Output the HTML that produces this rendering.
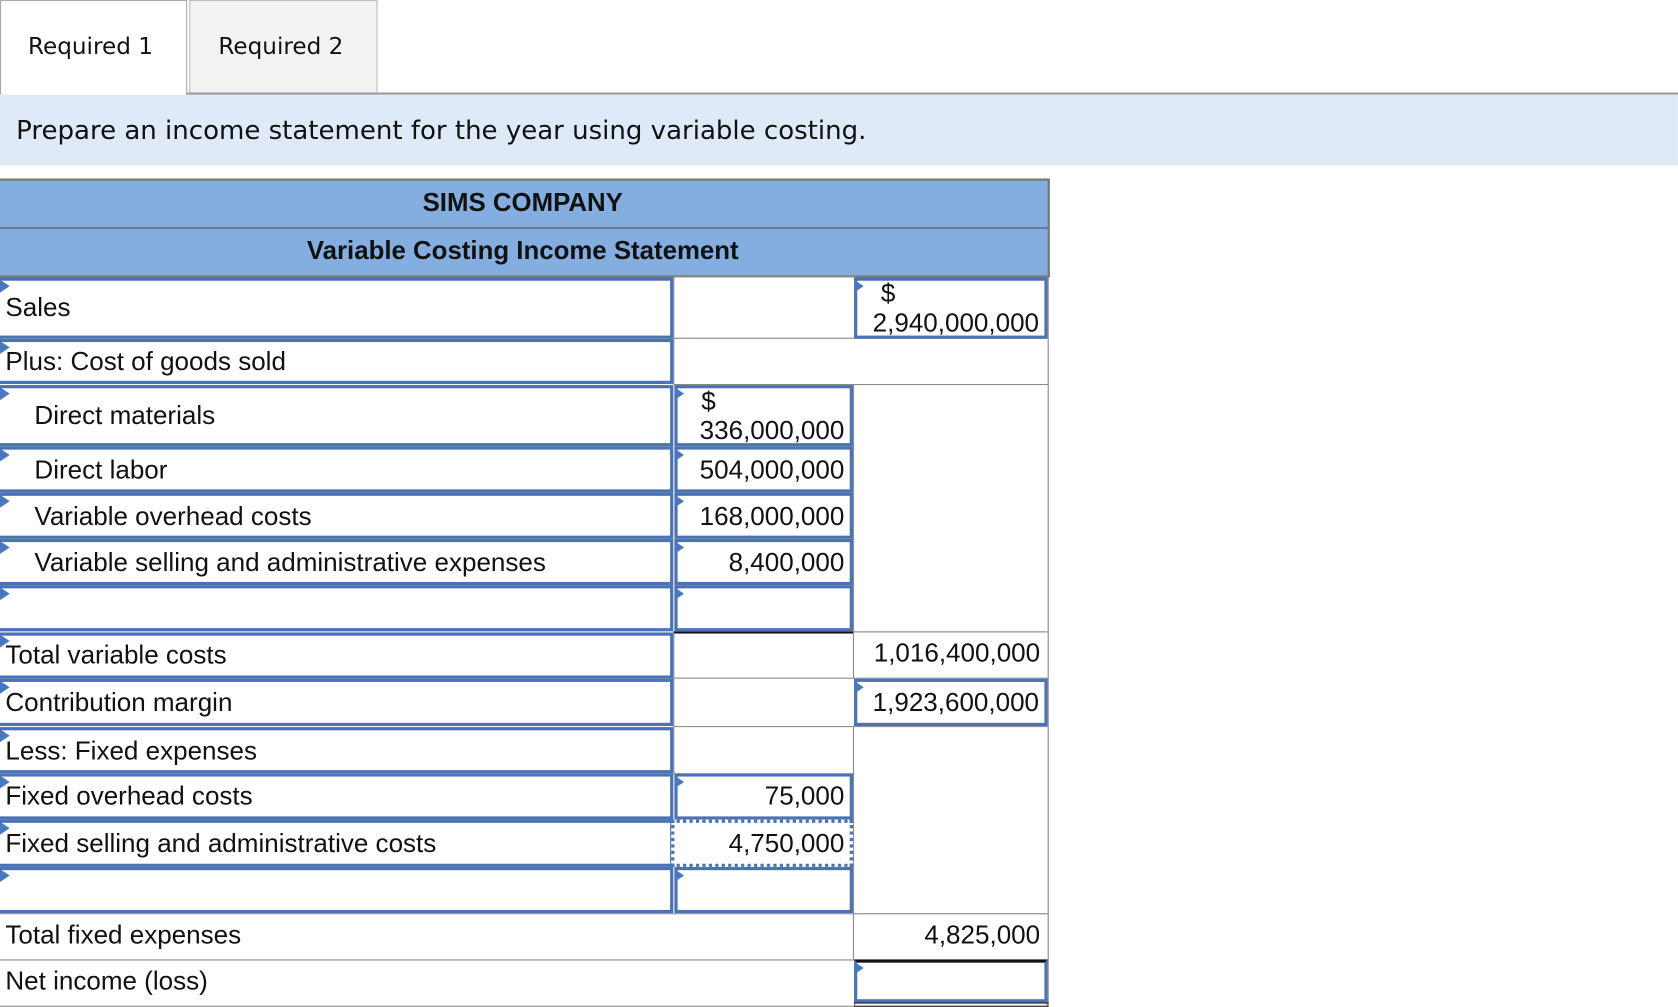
<!DOCTYPE html>
<html><head><meta charset="utf-8"><style>
*{margin:0;padding:0;box-sizing:border-box}
body{width:1678px;height:1004px;background:#fff;overflow:hidden;font-family:"Liberation Sans",Arial,sans-serif;color:#111}
#w{position:absolute;left:0;top:0;width:1560px;height:934px;transform:scale(1.0756);transform-origin:0 0}
div{position:absolute}
.c{border:1px solid #8a8a8a;background:#fff}
.b{border:3px solid #4a72b5;background:#fff;font-size:24.2px;line-height:27px}
.t{width:0;height:0;border-top:6px solid transparent;border-bottom:6px solid transparent;border-left:9px solid #4a78c0;left:-3px;top:-1px}
.l{font-size:24.2px;line-height:27px}
.r{text-align:right;padding-right:5px;white-space:nowrap}
.d{font-family:"DejaVu Sans",Verdana,sans-serif}
</style></head><body><div id="w">
<div style="left:0;top:0;width:174px;height:88px;border:1px solid #aaa;border-bottom:none;background:#fff"></div>
<div class="d" style="left:26px;top:30px;font-size:21.5px;line-height:27px">Required 1</div>
<div style="left:176px;top:0;width:175px;height:87px;border:1px solid #bbb;border-bottom:none;background:#f3f3f3"></div>
<div class="d" style="left:203px;top:30px;font-size:21.5px;line-height:27px">Required 2</div>
<div style="left:173px;top:86px;width:1387px;height:2px;background:#999"></div>
<div style="left:0;top:88px;width:1560px;height:66px;background:#deeaf8"></div>
<div class="d" style="left:15px;top:106px;font-size:24.2px;line-height:30px">Prepare an income statement for the year using variable costing.</div>
<div style="left:0;top:166px;width:976px;height:92px;background:#84aee0;border:2px solid #777;border-left:none"></div>
<div style="left:0;top:211px;width:975px;height:2px;background:#6a7c94"></div>
<div style="left:0;top:175px;width:972px;text-align:center;font-weight:bold;font-size:24px;line-height:28px">SIMS COMPANY</div>
<div style="left:0;top:220px;width:972px;text-align:center;font-weight:bold;font-size:24px;line-height:28px">Variable Costing Income Statement</div>
<div style="left:973px;top:257px;width:2px;height:678px;background:#888"></div>
<div class="c" style="left:626px;top:257px;width:169px;height:58px"></div>
<div class="c" style="left:626px;top:314px;width:349px;height:44px"></div>
<div class="c" style="left:793px;top:357px;width:182px;height:231px"></div>
<div class="c" style="left:626px;top:587px;width:169px;height:44px;border-top:2px solid #111"></div>
<div class="c" style="left:793px;top:587px;width:182px;height:44px"></div>
<div class="l r" style="left:794px;top:594px;width:178px">1,016,400,000</div>
<div class="c" style="left:626px;top:630px;width:169px;height:46px"></div>
<div class="c" style="left:626px;top:675px;width:169px;height:45px"></div>
<div class="c" style="left:793px;top:675px;width:182px;height:175px"></div>
<div class="c" style="left:0;top:849px;width:795px;height:44px;border-left:none"></div>
<div class="l" style="left:5px;top:856px">Total fixed expenses</div>
<div class="c" style="left:793px;top:849px;width:182px;height:44px"></div>
<div class="l r" style="left:794px;top:856px;width:178px">4,825,000</div>
<div class="c" style="left:0;top:892px;width:795px;height:44px;border-left:none"></div>
<div class="l" style="left:5px;top:899px">Net income (loss)</div>
<div class="b" style="left:794px;top:892px;width:180px;height:40px;border-top-color:#111"><div class="t"></div></div>
<div style="left:794px;top:932px;width:181px;height:4px;border-top:1px solid #111;border-bottom:1px solid #111"></div>
<div class="b" style="left:-3px;top:258px;width:629px;height:57px"><div class="t" style="left:0"></div><div style="left:5px;top:12px">Sales</div></div>
<div class="b" style="left:-3px;top:315px;width:629px;height:42px"><div class="t" style="left:0"></div><div style="left:5px;top:5px">Plus: Cost of goods sold</div></div>
<div class="b" style="left:-3px;top:358px;width:629px;height:57px"><div class="t" style="left:0"></div><div style="left:32px;top:12px">Direct materials</div></div>
<div class="b" style="left:-3px;top:415px;width:629px;height:43px"><div class="t" style="left:0"></div><div style="left:32px;top:6px">Direct labor</div></div>
<div class="b" style="left:-3px;top:458px;width:629px;height:43px"><div class="t" style="left:0"></div><div style="left:32px;top:6px">Variable overhead costs</div></div>
<div class="b" style="left:-3px;top:501px;width:629px;height:43px"><div class="t" style="left:0"></div><div style="left:32px;top:6px">Variable selling and administrative expenses</div></div>
<div class="b" style="left:-3px;top:544px;width:629px;height:43px"><div class="t" style="left:0"></div></div>
<div class="b" style="left:-3px;top:588px;width:629px;height:43px"><div class="t" style="left:0"></div><div style="left:5px;top:5px">Total variable costs</div></div>
<div class="b" style="left:-3px;top:631px;width:629px;height:44px"><div class="t" style="left:0"></div><div style="left:5px;top:6px">Contribution margin</div></div>
<div class="b" style="left:-3px;top:676px;width:629px;height:43px"><div class="t" style="left:0"></div><div style="left:5px;top:6px">Less: Fixed expenses</div></div>
<div class="b" style="left:-3px;top:719px;width:629px;height:43px"><div class="t" style="left:0"></div><div style="left:5px;top:5px">Fixed overhead costs</div></div>
<div class="b" style="left:-3px;top:762px;width:629px;height:44px"><div class="t" style="left:0"></div><div style="left:5px;top:6px">Fixed selling and administrative costs</div></div>
<div class="b" style="left:-3px;top:806px;width:629px;height:43px"><div class="t" style="left:0"></div></div>
<div class="b" style="left:794px;top:258px;width:180px;height:57px"><div class="t"></div><div style="left:22px;top:-1px">$</div><div class="r" style="right:0;top:26px">2,940,000,000</div></div>
<div class="b" style="left:627px;top:358px;width:166px;height:57px"><div class="t"></div><div style="left:22px;top:-1px">$</div><div class="r" style="right:0;top:26px">336,000,000</div></div>
<div class="b" style="left:627px;top:415px;width:166px;height:43px"><div class="t"></div><div class="r" style="right:0;top:6px">504,000,000</div></div>
<div class="b" style="left:627px;top:458px;width:166px;height:43px"><div class="t"></div><div class="r" style="right:0;top:6px">168,000,000</div></div>
<div class="b" style="left:627px;top:501px;width:166px;height:43px"><div class="t"></div><div class="r" style="right:0;top:6px">8,400,000</div></div>
<div class="b" style="left:627px;top:544px;width:166px;height:43px"><div class="t"></div></div>
<div class="b" style="left:794px;top:631px;width:180px;height:44px"><div class="t"></div><div class="r" style="right:0;top:6px">1,923,600,000</div></div>
<div class="b" style="left:627px;top:719px;width:166px;height:43px"><div class="t"></div><div class="r" style="right:0;top:5px">75,000</div></div>
<div class="b" style="left:624px;top:762px;width:169px;height:44px;border-style:dotted"><div class="r" style="right:0;top:6px">4,750,000</div></div>
<div class="b" style="left:627px;top:806px;width:166px;height:43px"><div class="t"></div></div>
</div></body></html>
